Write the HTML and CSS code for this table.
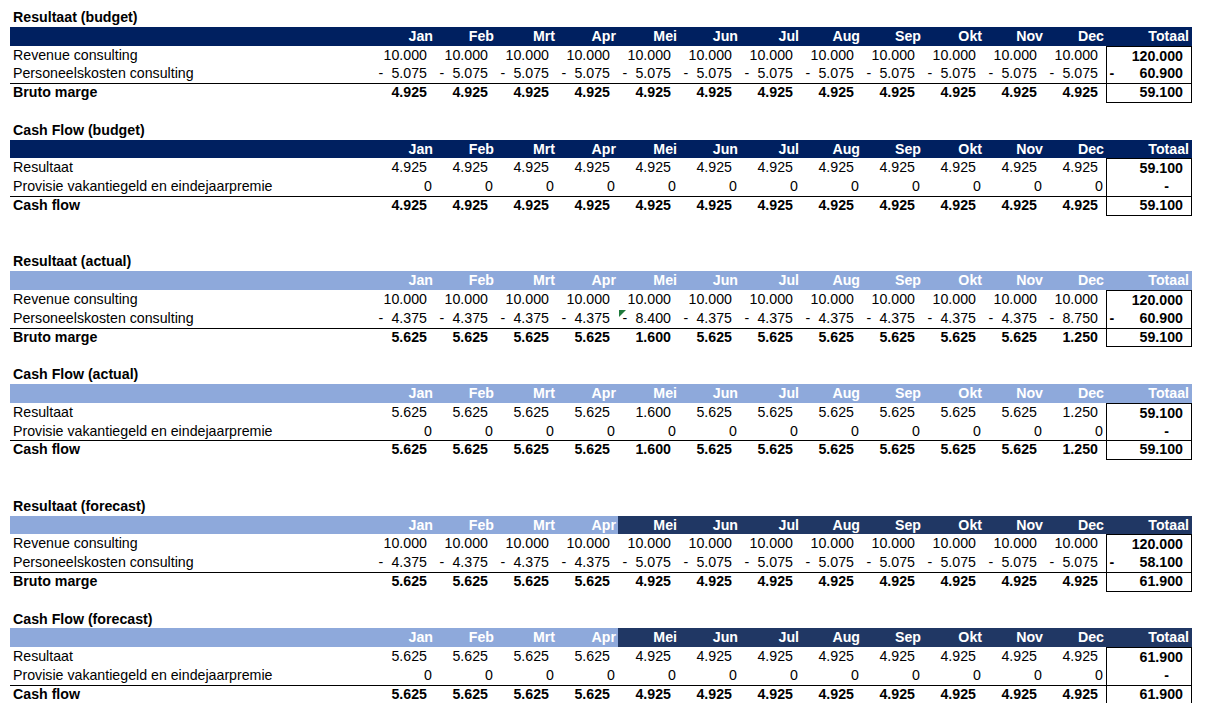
FILE: index.html
```
<!DOCTYPE html>
<html lang="nl">
<head>
<meta charset="utf-8">
<title>Resultaat en Cash Flow</title>
<link rel="stylesheet" href="styles.css">
</head>
<body>
<div class="sheet">

<div class="title">Resultaat (budget)</div>
<div class="row hdr navy"><span></span><span class="h">Jan</span><span class="h">Feb</span><span class="h">Mrt</span><span class="h">Apr</span><span class="h">Mei</span><span class="h">Jun</span><span class="h">Jul</span><span class="h">Aug</span><span class="h">Sep</span><span class="h">Okt</span><span class="h">Nov</span><span class="h">Dec</span><span class="h ht">Totaal</span></div>
<div class="row"><span class="l">Revenue consulting</span><span class="n">10.000</span><span class="n">10.000</span><span class="n">10.000</span><span class="n">10.000</span><span class="n">10.000</span><span class="n">10.000</span><span class="n">10.000</span><span class="n">10.000</span><span class="n">10.000</span><span class="n">10.000</span><span class="n">10.000</span><span class="n">10.000</span><span class="n t tt">120.000</span></div>
<div class="row"><span class="l">Personeelskosten consulting</span><span class="n neg"><i>-</i>5.075</span><span class="n neg"><i>-</i>5.075</span><span class="n neg"><i>-</i>5.075</span><span class="n neg"><i>-</i>5.075</span><span class="n neg"><i>-</i>5.075</span><span class="n neg"><i>-</i>5.075</span><span class="n neg"><i>-</i>5.075</span><span class="n neg"><i>-</i>5.075</span><span class="n neg"><i>-</i>5.075</span><span class="n neg"><i>-</i>5.075</span><span class="n neg"><i>-</i>5.075</span><span class="n neg"><i>-</i>5.075</span><span class="n neg t"><i>-</i>60.900</span></div>
<div class="row sum"><span class="l">Bruto marge</span><span class="n">4.925</span><span class="n">4.925</span><span class="n">4.925</span><span class="n">4.925</span><span class="n">4.925</span><span class="n">4.925</span><span class="n">4.925</span><span class="n">4.925</span><span class="n">4.925</span><span class="n">4.925</span><span class="n">4.925</span><span class="n">4.925</span><span class="n t tb">59.100</span></div>
<div class="blank"></div>

<div class="title">Cash Flow (budget)</div>
<div class="row hdr navy"><span></span><span class="h">Jan</span><span class="h">Feb</span><span class="h">Mrt</span><span class="h">Apr</span><span class="h">Mei</span><span class="h">Jun</span><span class="h">Jul</span><span class="h">Aug</span><span class="h">Sep</span><span class="h">Okt</span><span class="h">Nov</span><span class="h">Dec</span><span class="h ht">Totaal</span></div>
<div class="row"><span class="l">Resultaat</span><span class="n">4.925</span><span class="n">4.925</span><span class="n">4.925</span><span class="n">4.925</span><span class="n">4.925</span><span class="n">4.925</span><span class="n">4.925</span><span class="n">4.925</span><span class="n">4.925</span><span class="n">4.925</span><span class="n">4.925</span><span class="n">4.925</span><span class="n t tt">59.100</span></div>
<div class="row"><span class="l">Provisie vakantiegeld en eindejaarpremie</span><span class="z">0</span><span class="z">0</span><span class="z">0</span><span class="z">0</span><span class="z">0</span><span class="z">0</span><span class="z">0</span><span class="z">0</span><span class="z">0</span><span class="z">0</span><span class="z">0</span><span class="z">0</span><span class="n t zt">-</span></div>
<div class="row sum"><span class="l">Cash flow</span><span class="n">4.925</span><span class="n">4.925</span><span class="n">4.925</span><span class="n">4.925</span><span class="n">4.925</span><span class="n">4.925</span><span class="n">4.925</span><span class="n">4.925</span><span class="n">4.925</span><span class="n">4.925</span><span class="n">4.925</span><span class="n">4.925</span><span class="n t tb">59.100</span></div>
<div class="blank"></div>
<div class="blank"></div>

<div class="title">Resultaat (actual)</div>
<div class="row hdr light"><span></span><span class="h">Jan</span><span class="h">Feb</span><span class="h">Mrt</span><span class="h">Apr</span><span class="h">Mei</span><span class="h">Jun</span><span class="h">Jul</span><span class="h">Aug</span><span class="h">Sep</span><span class="h">Okt</span><span class="h">Nov</span><span class="h">Dec</span><span class="h ht">Totaal</span></div>
<div class="row"><span class="l">Revenue consulting</span><span class="n">10.000</span><span class="n">10.000</span><span class="n">10.000</span><span class="n">10.000</span><span class="n">10.000</span><span class="n">10.000</span><span class="n">10.000</span><span class="n">10.000</span><span class="n">10.000</span><span class="n">10.000</span><span class="n">10.000</span><span class="n">10.000</span><span class="n t tt">120.000</span></div>
<div class="row"><span class="l">Personeelskosten consulting</span><span class="n neg"><i>-</i>4.375</span><span class="n neg"><i>-</i>4.375</span><span class="n neg"><i>-</i>4.375</span><span class="n neg"><i>-</i>4.375</span><span class="n neg flag"><i>-</i>8.400</span><span class="n neg"><i>-</i>4.375</span><span class="n neg"><i>-</i>4.375</span><span class="n neg"><i>-</i>4.375</span><span class="n neg"><i>-</i>4.375</span><span class="n neg"><i>-</i>4.375</span><span class="n neg"><i>-</i>4.375</span><span class="n neg"><i>-</i>8.750</span><span class="n neg t"><i>-</i>60.900</span></div>
<div class="row sum"><span class="l">Bruto marge</span><span class="n">5.625</span><span class="n">5.625</span><span class="n">5.625</span><span class="n">5.625</span><span class="n">1.600</span><span class="n">5.625</span><span class="n">5.625</span><span class="n">5.625</span><span class="n">5.625</span><span class="n">5.625</span><span class="n">5.625</span><span class="n">1.250</span><span class="n t tb">59.100</span></div>
<div class="blank"></div>

<div class="title">Cash Flow (actual)</div>
<div class="row hdr light"><span></span><span class="h">Jan</span><span class="h">Feb</span><span class="h">Mrt</span><span class="h">Apr</span><span class="h">Mei</span><span class="h">Jun</span><span class="h">Jul</span><span class="h">Aug</span><span class="h">Sep</span><span class="h">Okt</span><span class="h">Nov</span><span class="h">Dec</span><span class="h ht">Totaal</span></div>
<div class="row"><span class="l">Resultaat</span><span class="n">5.625</span><span class="n">5.625</span><span class="n">5.625</span><span class="n">5.625</span><span class="n">1.600</span><span class="n">5.625</span><span class="n">5.625</span><span class="n">5.625</span><span class="n">5.625</span><span class="n">5.625</span><span class="n">5.625</span><span class="n">1.250</span><span class="n t tt">59.100</span></div>
<div class="row"><span class="l">Provisie vakantiegeld en eindejaarpremie</span><span class="z">0</span><span class="z">0</span><span class="z">0</span><span class="z">0</span><span class="z">0</span><span class="z">0</span><span class="z">0</span><span class="z">0</span><span class="z">0</span><span class="z">0</span><span class="z">0</span><span class="z">0</span><span class="n t zt">-</span></div>
<div class="row sum"><span class="l">Cash flow</span><span class="n">5.625</span><span class="n">5.625</span><span class="n">5.625</span><span class="n">5.625</span><span class="n">1.600</span><span class="n">5.625</span><span class="n">5.625</span><span class="n">5.625</span><span class="n">5.625</span><span class="n">5.625</span><span class="n">5.625</span><span class="n">1.250</span><span class="n t tb">59.100</span></div>
<div class="blank"></div>
<div class="blank"></div>

<div class="title">Resultaat (forecast)</div>
<div class="row hdr light"><span></span><span class="h">Jan</span><span class="h">Feb</span><span class="h">Mrt</span><span class="h">Apr</span><span class="h dk">Mei</span><span class="h dk">Jun</span><span class="h dk">Jul</span><span class="h dk">Aug</span><span class="h dk">Sep</span><span class="h dk">Okt</span><span class="h dk">Nov</span><span class="h dk">Dec</span><span class="h ht dk">Totaal</span></div>
<div class="row"><span class="l">Revenue consulting</span><span class="n">10.000</span><span class="n">10.000</span><span class="n">10.000</span><span class="n">10.000</span><span class="n">10.000</span><span class="n">10.000</span><span class="n">10.000</span><span class="n">10.000</span><span class="n">10.000</span><span class="n">10.000</span><span class="n">10.000</span><span class="n">10.000</span><span class="n t tt">120.000</span></div>
<div class="row"><span class="l">Personeelskosten consulting</span><span class="n neg"><i>-</i>4.375</span><span class="n neg"><i>-</i>4.375</span><span class="n neg"><i>-</i>4.375</span><span class="n neg"><i>-</i>4.375</span><span class="n neg"><i>-</i>5.075</span><span class="n neg"><i>-</i>5.075</span><span class="n neg"><i>-</i>5.075</span><span class="n neg"><i>-</i>5.075</span><span class="n neg"><i>-</i>5.075</span><span class="n neg"><i>-</i>5.075</span><span class="n neg"><i>-</i>5.075</span><span class="n neg"><i>-</i>5.075</span><span class="n neg t"><i>-</i>58.100</span></div>
<div class="row sum"><span class="l">Bruto marge</span><span class="n">5.625</span><span class="n">5.625</span><span class="n">5.625</span><span class="n">5.625</span><span class="n">4.925</span><span class="n">4.925</span><span class="n">4.925</span><span class="n">4.925</span><span class="n">4.925</span><span class="n">4.925</span><span class="n">4.925</span><span class="n">4.925</span><span class="n t tb">61.900</span></div>
<div class="blank"></div>

<div class="title">Cash Flow (forecast)</div>
<div class="row hdr light"><span></span><span class="h">Jan</span><span class="h">Feb</span><span class="h">Mrt</span><span class="h">Apr</span><span class="h dk">Mei</span><span class="h dk">Jun</span><span class="h dk">Jul</span><span class="h dk">Aug</span><span class="h dk">Sep</span><span class="h dk">Okt</span><span class="h dk">Nov</span><span class="h dk">Dec</span><span class="h ht dk">Totaal</span></div>
<div class="row"><span class="l">Resultaat</span><span class="n">5.625</span><span class="n">5.625</span><span class="n">5.625</span><span class="n">5.625</span><span class="n">4.925</span><span class="n">4.925</span><span class="n">4.925</span><span class="n">4.925</span><span class="n">4.925</span><span class="n">4.925</span><span class="n">4.925</span><span class="n">4.925</span><span class="n t tt">61.900</span></div>
<div class="row"><span class="l">Provisie vakantiegeld en eindejaarpremie</span><span class="z">0</span><span class="z">0</span><span class="z">0</span><span class="z">0</span><span class="z">0</span><span class="z">0</span><span class="z">0</span><span class="z">0</span><span class="z">0</span><span class="z">0</span><span class="z">0</span><span class="z">0</span><span class="n t zt">-</span></div>
<div class="row sum"><span class="l">Cash flow</span><span class="n">5.625</span><span class="n">5.625</span><span class="n">5.625</span><span class="n">5.625</span><span class="n">4.925</span><span class="n">4.925</span><span class="n">4.925</span><span class="n">4.925</span><span class="n">4.925</span><span class="n">4.925</span><span class="n">4.925</span><span class="n">4.925</span><span class="n t tb">61.900</span></div>

</div>
</body>
</html>
```

FILE: styles.css
```
html, body {
  margin: 0;
  padding: 0;
  background: #ffffff;
}

body {
  font-family: "Liberation Sans", Arial, sans-serif;
  font-size: 14.2px;
  color: #000000;
}

.sheet {
  padding: 8px 0 0 10px;
  width: 1182px;
}

.title,
.blank,
.row {
  height: 18.8px;
  line-height: 18.8px;
  box-sizing: border-box;
}

.title {
  font-weight: bold;
  padding-left: 3px;
  white-space: nowrap;
}

.row {
  display: grid;
  grid-template-columns: 364px repeat(12, 61px) 86px;
}

.row > span {
  display: block;
  box-sizing: border-box;
  white-space: nowrap;
  overflow: visible;
}

.hdr {
  color: #ffffff;
  font-weight: bold;
}

.navy { background: #002060; }
.light { background: #8ea9db; }
.hdr .dk { background: #203764; }

.h {
  text-align: right;
  padding-right: 2px;
}

.h.ht { padding-right: 3px; }

.l { padding-left: 3px; }

.n {
  text-align: right;
  padding-right: 8px;
  padding-left: 4.5px;
}

.neg {
  display: flex !important;
  justify-content: space-between;
}

.neg i { font-style: normal; }

.z {
  text-align: right;
  padding-right: 3px;
}

.sum {
  font-weight: bold;
  border-top: 1px solid #000000;
  line-height: 17.8px;
}

.t {
  font-weight: bold;
  border-left: 1px solid #000000;
  border-right: 1px solid #000000;
}

.neg.t { padding-left: 2.5px; }

.tt { border-top: 1px solid #000000; }
.tb { border-bottom: 1px solid #000000; }

.zt { padding-right: 22px; }

.flag { position: relative; }

.flag::before {
  content: "";
  position: absolute;
  left: 1px;
  top: 1px;
  width: 0;
  height: 0;
  border-top: 7px solid #1f7a3c;
  border-right: 7px solid transparent;
}
```
